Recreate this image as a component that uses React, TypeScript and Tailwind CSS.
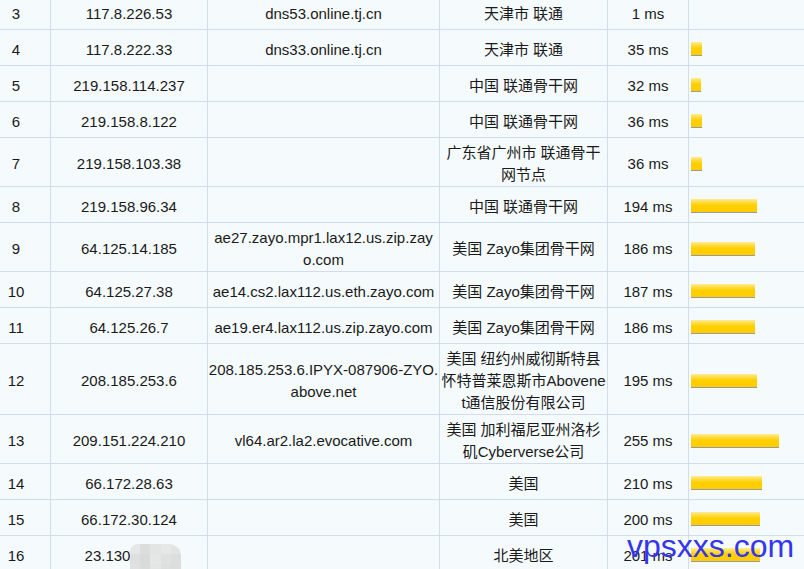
import React from "react";

type Row = {
  hop: string;
  ip: string;
  host: string[];
  loc: string[];
  ms: string;
  bar: number;
};

const rows: Row[] = [
  { hop: "3", ip: "117.8.226.53", host: ["dns53.online.tj.cn"], loc: ["天津市 联通"], ms: "1 ms", bar: 0 },
  { hop: "4", ip: "117.8.222.33", host: ["dns33.online.tj.cn"], loc: ["天津市 联通"], ms: "35 ms", bar: 11 },
  { hop: "5", ip: "219.158.114.237", host: [], loc: ["中国 联通骨干网"], ms: "32 ms", bar: 10 },
  { hop: "6", ip: "219.158.8.122", host: [], loc: ["中国 联通骨干网"], ms: "36 ms", bar: 11 },
  { hop: "7", ip: "219.158.103.38", host: [], loc: ["广东省广州市 联通骨干", "网节点"], ms: "36 ms", bar: 11 },
  { hop: "8", ip: "219.158.96.34", host: [], loc: ["中国 联通骨干网"], ms: "194 ms", bar: 66 },
  { hop: "9", ip: "64.125.14.185", host: ["ae27.zayo.mpr1.lax12.us.zip.zay", "o.com"], loc: ["美国 Zayo集团骨干网"], ms: "186 ms", bar: 64 },
  { hop: "10", ip: "64.125.27.38", host: ["ae14.cs2.lax112.us.eth.zayo.com"], loc: ["美国 Zayo集团骨干网"], ms: "187 ms", bar: 64 },
  { hop: "11", ip: "64.125.26.7", host: ["ae19.er4.lax112.us.zip.zayo.com"], loc: ["美国 Zayo集团骨干网"], ms: "186 ms", bar: 64 },
  {
    hop: "12",
    ip: "208.185.253.6",
    host: ["208.185.253.6.IPYX-087906-ZYO.", "above.net"],
    loc: ["美国 纽约州威彻斯特县", "怀特普莱恩斯市Abovene", "t通信股份有限公司"],
    ms: "195 ms",
    bar: 66,
  },
  { hop: "13", ip: "209.151.224.210", host: ["vl64.ar2.la2.evocative.com"], loc: ["美国 加利福尼亚州洛杉", "矶Cyberverse公司"], ms: "255 ms", bar: 88 },
  { hop: "14", ip: "66.172.28.63", host: [], loc: ["美国"], ms: "210 ms", bar: 71 },
  { hop: "15", ip: "66.172.30.124", host: [], loc: ["美国"], ms: "200 ms", bar: 69 },
  { hop: "16", ip: "23.130", host: [], loc: ["北美地区"], ms: "201 ms", bar: 69 },
];

const cell =
  "flex flex-col items-center justify-center min-h-[35px] pt-[4px] border-r border-[#d3dcea] text-center whitespace-nowrap";

function Lines({ lines }: { lines: string[] }) {
  return (
    <>
      {lines.map((l, i) => (
        <span key={i} className="block">
          {l}
        </span>
      ))}
    </>
  );
}

function Bar({ w }: { w: number }) {
  if (!w) return null;
  return (
    <div
      className="mt-[3px] h-[14px] border-b border-[#9a9a9a] bg-[linear-gradient(to_bottom,#ffec99_0%,#ffdc40_25%,#ffcf00_50%,#ffcc00_100%)]"
      style={{ width: w }}
    />
  );
}

export default function App() {
  return (
    <div
      className="relative w-[804px] h-[569px] overflow-hidden bg-[#f5fafc] text-[15px] leading-[22px] text-[#1a1a1a]"
      style={{ fontFamily: '"Liberation Sans", "Noto Sans CJK SC", sans-serif' }}
    >
      <div className="-mt-[6px] flex flex-col">
        {rows.map((r) => (
          <div key={r.hop} className="flex border-b border-[#d3dcea]">
            <div className={`${cell} w-[51px] pr-[18px]`}>{r.hop}</div>
            <div className={`${cell} w-[157px]`}>
              {r.hop === "16" ? (
                <span className="block">
                  {r.ip}
                  <span className="inline-block w-[43px]" />
                </span>
              ) : (
                r.ip
              )}
            </div>
            <div className={`${cell} w-[232px]`}>
              <Lines lines={r.host} />
            </div>
            <div className={`${cell} w-[168px]`}>
              <Lines lines={r.loc} />
            </div>
            <div className={`${cell} w-[81px]`}>{r.ms}</div>
            <div className="flex flex-1 items-center pl-[2px] min-h-[35px]">
              <Bar w={r.bar} />
            </div>
          </div>
        ))}
      </div>

      {/* mosaic blur over part of IP */}
      <div className="absolute left-[130px] top-[544px] w-[51px] h-[30px] overflow-hidden rounded-tl-[8px] rounded-tr-[12px] grid grid-cols-5 grid-rows-3">
        <div className="bg-[#e6e8e8]" />
        <div className="bg-[#dcdddd]" />
        <div className="bg-[#e3e5e5]" />
        <div className="bg-[#e6e8e8]" />
        <div className="bg-[#e2e3e3]" />
        <div className="bg-[#dedfdf]" />
        <div className="bg-[#d9dada]" />
        <div className="bg-[#e4e7e7]" />
        <div className="bg-[#dfe1e1]" />
        <div className="bg-[#dcdddd]" />
        <div className="bg-[#e0e1e1]" />
        <div className="bg-[#dadbdb]" />
        <div className="bg-[#e3e5e5]" />
        <div className="bg-[#dddfdf]" />
        <div className="bg-[#dcdede]" />
      </div>

      {/* watermark */}
      <div
        className="absolute left-[627px] top-[530px] text-[32px] leading-[32px] text-[#3535ee] whitespace-nowrap"
        style={{ fontFamily: '"Liberation Sans", Arial, sans-serif' }}
      >
        vpsxxs.com
      </div>
    </div>
  );
}
